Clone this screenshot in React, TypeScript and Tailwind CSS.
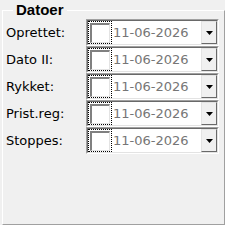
import React from "react";

const rows = ["Oprettet:", "Dato II:", "Rykket:", "Prist.reg:", "Stoppes:"];

function Picker() {
  return (
    <div className="w-[133px] h-[27px] border-t border-l border-t-[#a0a0a0] border-l-[#a0a0a0] border-b border-r border-b-white border-r-white">
      <div className="w-full h-full border-t border-l border-t-[#696969] border-l-[#696969] border-b border-r border-b-[#e3e3e3] border-r-[#e3e3e3] bg-white flex items-stretch">
        <div className="ml-[0px] w-[24px] border border-dotted border-black flex items-center justify-center">
          <div className="w-[20px] h-[20px] border-t-2 border-l-2 border-t-[#808080] border-l-[#808080] border-b border-r border-b-[#e3e3e3] border-r-[#e3e3e3] bg-white" />
        </div>
        <div className="flex-1 flex items-center pl-[1px] text-[13px] text-[#767676] [font-family:'DejaVu_Sans',sans-serif]">
          11-06-2026
        </div>
        <div className="w-[16px] border-t border-l border-t-[#e3e3e3] border-l-[#e3e3e3] border-b border-r border-b-[#696969] border-r-[#696969] bg-[#f0f0f0] flex items-center justify-center">
          <svg width="7" height="4" viewBox="0 0 7 4">
            <path d="M0 0h7L3.5 4z" fill="#000" />
          </svg>
        </div>
      </div>
    </div>
  );
}

export default function App() {
  return (
    <div className="relative w-[225px] h-[225px] bg-[#f0f0f0] overflow-hidden [font-family:'DejaVu_Sans',sans-serif]">
      <div className="absolute left-[13px] top-[0px] px-[3px] bg-[#f0f0f0] text-[15px] leading-[19px] font-bold text-black [font-family:'Liberation_Sans',sans-serif]">
        Datoer
      </div>
      <div className="ml-[2px] mt-[10px] w-[223px] h-[215px] border-t border-l border-t-white border-l-white border-r border-b border-r-[#a0a0a0] border-b-[#a0a0a0] pt-[8px] pl-[3px]">
        <div className="flex flex-col">
          {rows.map((r) => (
            <div key={r} className="flex items-center h-[27px]">
              <div className="w-[80px] text-[13px] text-black leading-none">{r}</div>
              <Picker />
            </div>
          ))}
        </div>
      </div>
    </div>
  );
}
